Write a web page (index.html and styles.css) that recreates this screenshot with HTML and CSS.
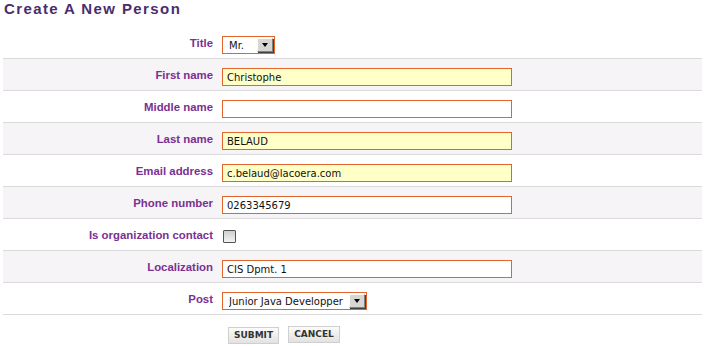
FILE: index.html
```html
<!DOCTYPE html>
<html lang="en">
<head>
  <meta charset="UTF-8">
  <title>Create A New Person</title>
  <link rel="stylesheet" href="styles.css">
</head>
<body>
  <h1 class="page-title">Create A New Person</h1>

  <form class="person-form">
    <div class="form-row">
      <label class="field-label" for="title">Title</label>
      <span class="select-wrap select-title">
        <select id="title">
          <option>Mr.</option>
          <option>Mrs.</option>
        </select>
        <span class="select-btn"><span class="arrow"></span></span>
      </span>
    </div>

    <div class="form-row shaded">
      <label class="field-label" for="firstname">First name</label>
      <input class="text-field filled" id="firstname" type="text" value="Christophe">
    </div>

    <div class="form-row">
      <label class="field-label" for="middlename">Middle name</label>
      <input class="text-field" id="middlename" type="text" value="">
    </div>

    <div class="form-row shaded">
      <label class="field-label" for="lastname">Last name</label>
      <input class="text-field filled" id="lastname" type="text" value="BELAUD">
    </div>

    <div class="form-row">
      <label class="field-label" for="email">Email address</label>
      <input class="text-field filled" id="email" type="text" value="c.belaud@lacoera.com">
    </div>

    <div class="form-row shaded">
      <label class="field-label" for="phone">Phone number</label>
      <input class="text-field" id="phone" type="text" value="0263345679">
    </div>

    <div class="form-row">
      <label class="field-label" for="orgcontact">Is organization contact</label>
      <input class="check-field" id="orgcontact" type="checkbox">
    </div>

    <div class="form-row shaded">
      <label class="field-label" for="localization">Localization</label>
      <input class="text-field" id="localization" type="text" value="CIS Dpmt. 1">
    </div>

    <div class="form-row">
      <label class="field-label" for="post">Post</label>
      <span class="select-wrap select-post">
        <select id="post">
          <option>Junior Java Developper</option>
          <option>Senior Java Developper</option>
        </select>
        <span class="select-btn"><span class="arrow"></span></span>
      </span>
    </div>

    <div class="form-actions">
      <button type="submit" class="btn btn-submit">Submit</button>
      <button type="button" class="btn btn-cancel">Cancel</button>
    </div>
  </form>
</body>
</html>
```

FILE: styles.css
```css
body {
  margin: 0;
  background: #fff;
  font-family: "Liberation Sans", Arial, sans-serif;
}

.page-title {
  margin: 0 0 10px 4px;
  font-size: 15px;
  line-height: 17px;
  letter-spacing: 1.4px;
  font-weight: bold;
  color: #4a2d6d;
}

.person-form {
  width: 699px;
  margin-left: 3px;
}

.form-row {
  display: grid;
  grid-template-columns: 210px 1fr;
  column-gap: 9px;
  align-items: start;
  padding-top: 9px;
  box-sizing: border-box;
  height: 32px;
  border-bottom: 1px solid #dadada;
}
.form-row.shaded {
  background: #f6f4f7;
}

.field-label {
  text-align: right;
  font-size: 11.4px;
  font-weight: bold;
  line-height: 13px;
  padding-top: 1px;
  color: #7a3091;
}

.text-field {
  width: 290px;
  height: 18px;
  box-sizing: border-box;
  margin: 0;
  padding: 0 4px;
  border: 1px solid #e2652b;
  background: #fff;
  font-family: "DejaVu Sans", Verdana, sans-serif;
  font-size: 10px;
  color: #111;
  outline: none;
}
.text-field.filled {
  background: #ffffc8;
}

.check-field {
  appearance: none;
  -webkit-appearance: none;
  width: 13px;
  height: 13px;
  margin: 2px 0 0 1px;
  border: 1px solid #555;
  border-radius: 1px;
  background: linear-gradient(#cfcfcf, #f2f2f2);
}

.select-wrap {
  position: relative;
  display: inline-block;
  justify-self: start;
}
.select-wrap select {
  appearance: none;
  -webkit-appearance: none;
  display: block;
  height: 18px;
  box-sizing: border-box;
  margin: 0;
  padding: 0 0 0 6px;
  border: 1px solid #e2652b;
  background: #fff;
  font-family: "DejaVu Sans", Verdana, sans-serif;
  font-size: 10px;
  color: #111;
  outline: none;
}
.select-title select {
  width: 53px;
}
.select-post select {
  width: 145px;
}

/* raised arrow button drawn over the select */
.select-btn {
  position: absolute;
  top: 2px;
  right: 2px;
  width: 16px;
  height: 14px;
  box-sizing: border-box;
  background: #d8d6d2;
  border-top: 1px solid #fff;
  border-left: 1px solid #fff;
  border-right: 1px solid #808080;
  border-bottom: 1px solid #808080;
  box-shadow: 1px 1px 0 #404040;
  display: flex;
  align-items: center;
  justify-content: center;
  pointer-events: none;
}
.select-btn .arrow {
  width: 0;
  height: 0;
  border-left: 3px solid transparent;
  border-right: 3px solid transparent;
  border-top: 4px solid #000;
}

.form-actions {
  display: flex;
  gap: 9px;
  padding: 12px 0 0 225px;
}

.btn {
  height: 17px;
  padding: 0 5px;
  margin: 0;
  border: 1px solid #cfcfcf;
  background: linear-gradient(#fbfbfb, #e2e2e2);
  font-family: "DejaVu Sans", Verdana, sans-serif;
  font-size: 9px;
  font-weight: bold;
  text-transform: uppercase;
  color: #333;
  line-height: 15px;
}
.btn-submit {
  width: 51px;
}
.btn-cancel {
  width: 52px;
  margin-top: -1px;
}
```
